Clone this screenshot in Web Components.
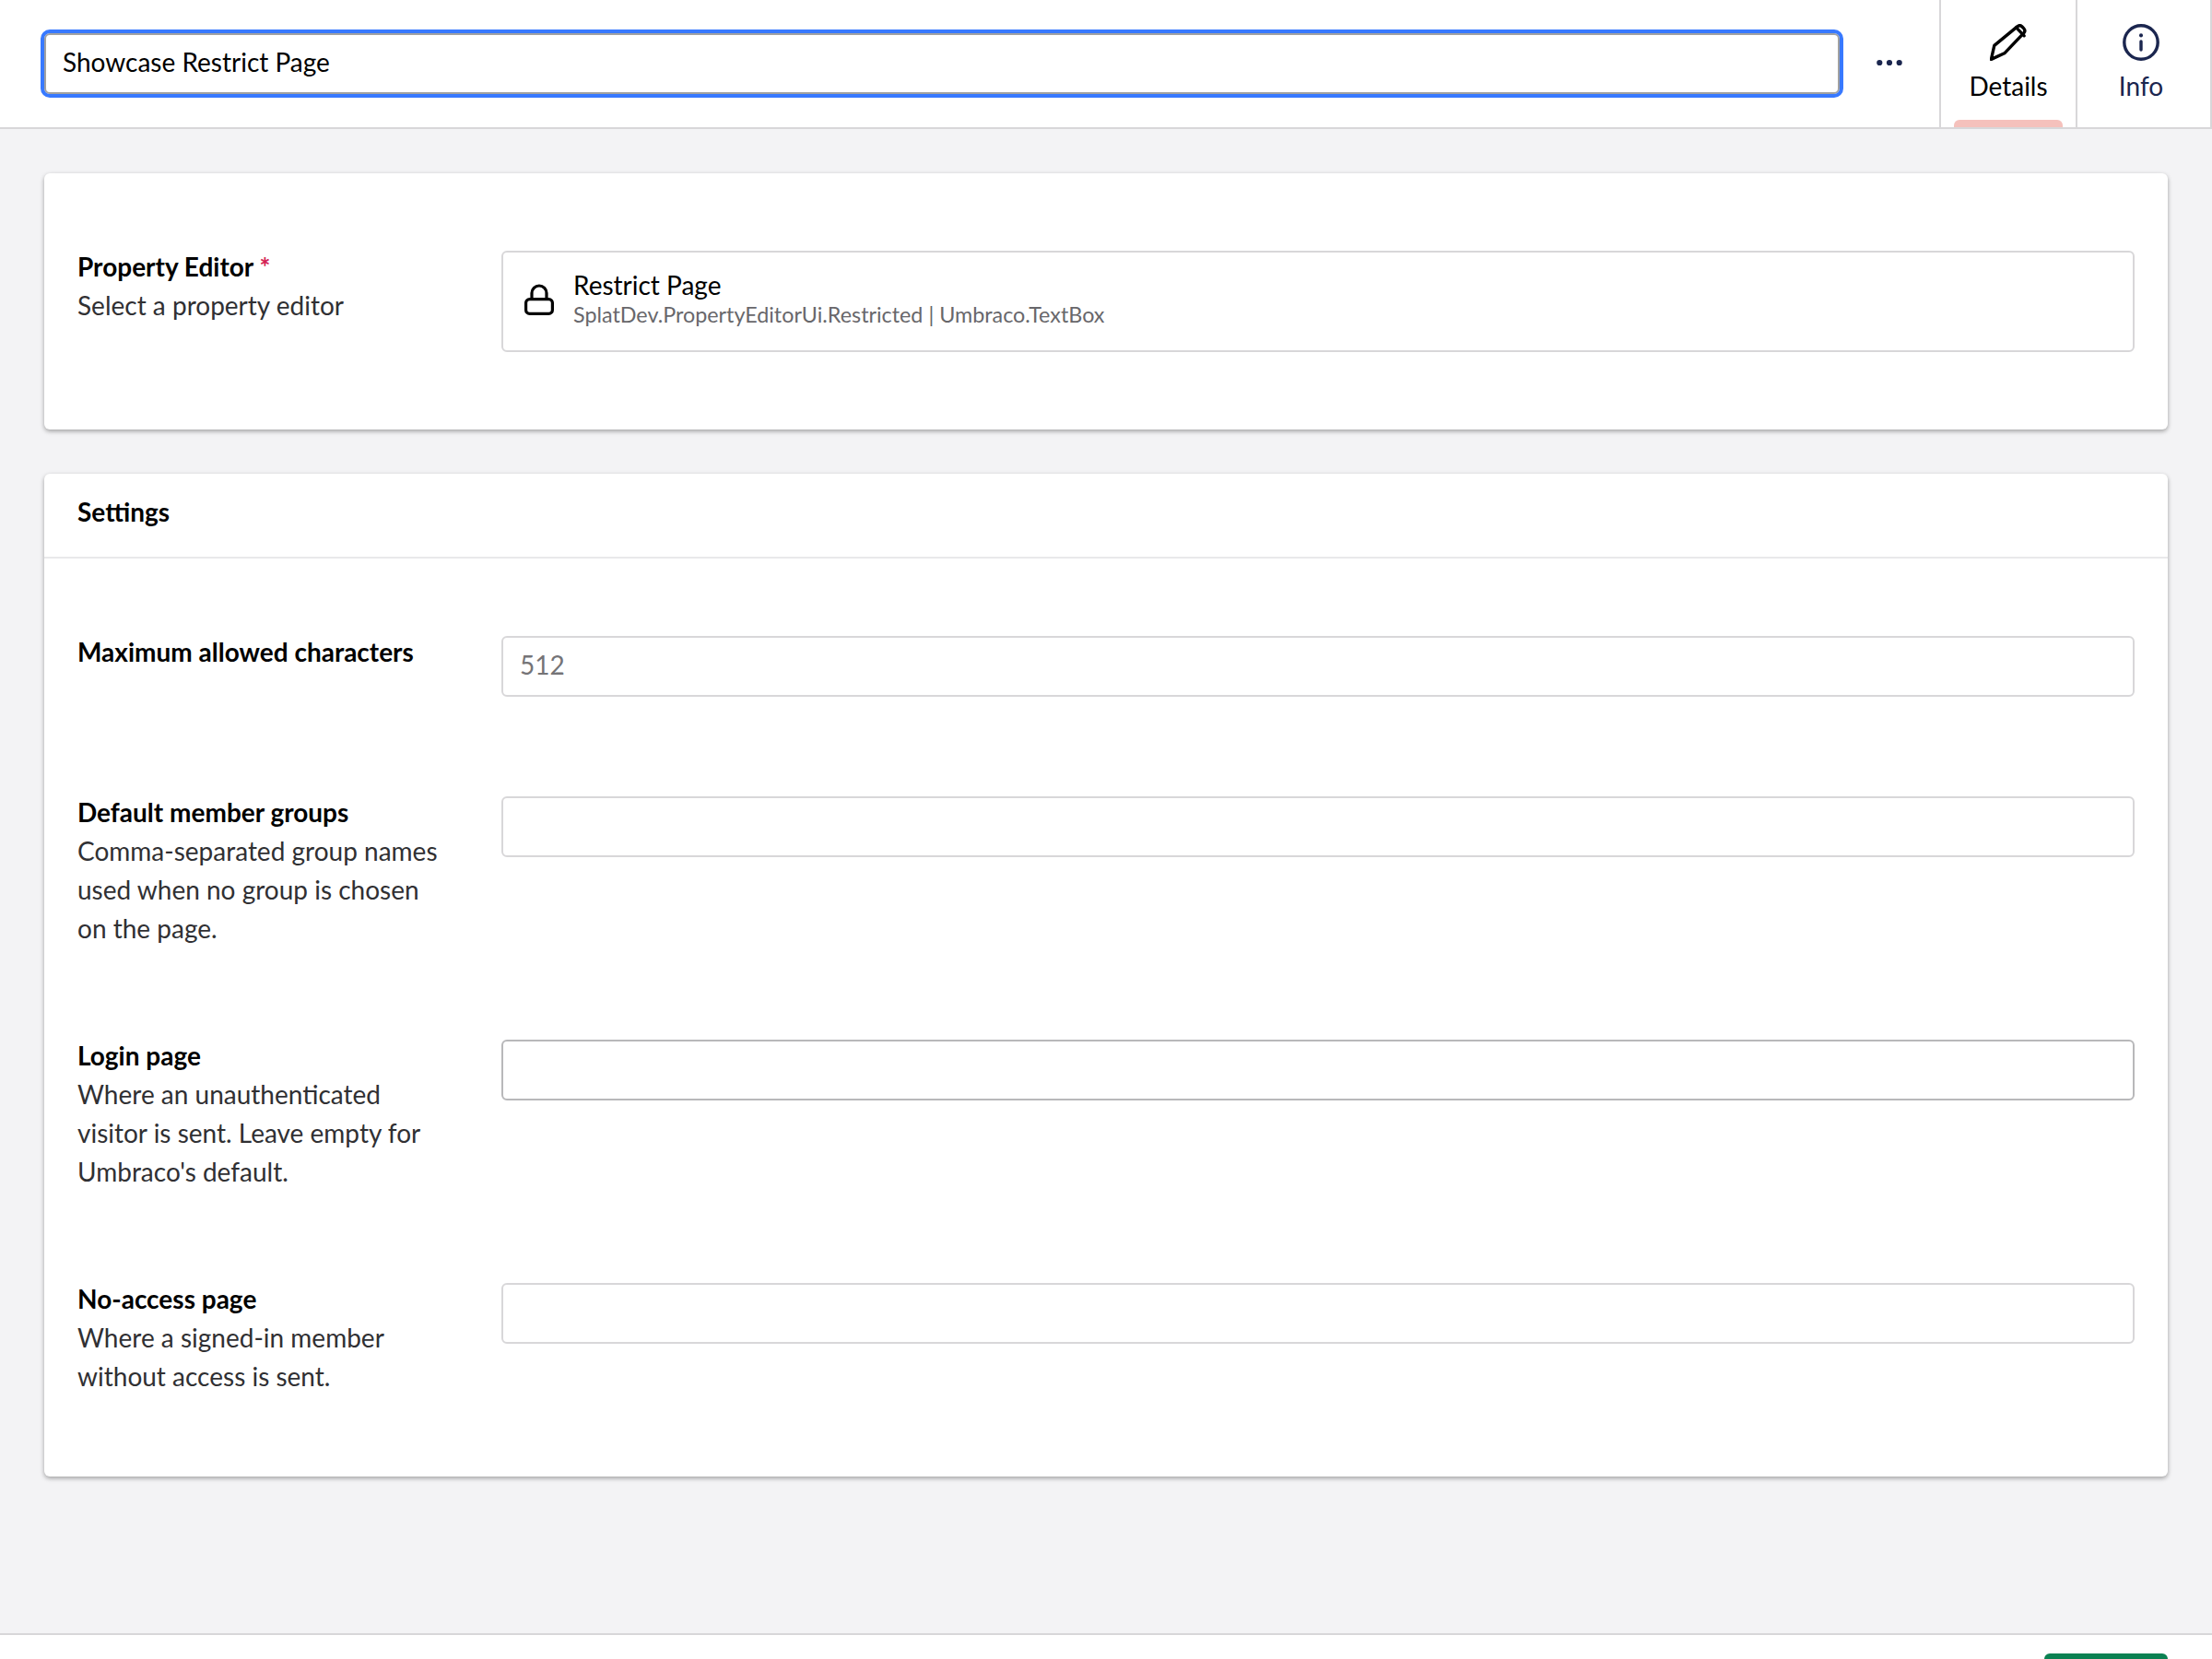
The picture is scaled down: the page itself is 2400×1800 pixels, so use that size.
<!DOCTYPE html>
<html><head><meta charset="utf-8">
<style>
html,body{margin:0;padding:0;height:1800px;overflow:hidden;background:#f3f3f5;font-family:Lato,"Liberation Sans",sans-serif;font-size:28px;line-height:42px;color:#000}
</style></head><body>
<editor-shell>
<editor-header slot="header" value="Showcase Restrict Page"></editor-header>
<prop-card>
  <prop-row label="Property Editor" required desc="Select a property editor">
    <picker-box name="Restrict Page" alias="SplatDev.PropertyEditorUi.Restricted | Umbraco.TextBox"></picker-box>
  </prop-row>
</prop-card>
<prop-card headline="Settings" tail="40">
  <prop-row label="Maximum allowed characters"><text-box placeholder="512"></text-box></prop-row>
  <prop-row label="Default member groups" desc="Comma-separated group names used when no group is chosen on the page."><text-box></text-box></prop-row>
  <prop-row label="Login page" desc="Where an unauthenticated visitor is sent. Leave empty for Umbraco's default."><text-box dark></text-box></prop-row>
  <prop-row label="No-access page" desc="Where a signed-in member without access is sent."><text-box></text-box></prop-row>
</prop-card>
<editor-footer slot="footer"></editor-footer>
</editor-shell>
<script>
function def(name, html, init){
  customElements.define(name, class extends HTMLElement{
    constructor(){super();this.attachShadow({mode:'open'});}
    connectedCallback(){
      this.shadowRoot.innerHTML = typeof html==='function'?html(this):html;
      if(init)init(this);
    }
  });
}
def('editor-shell',`<style>
:host{display:flex;flex-direction:column;height:1800px;overflow:hidden}
main{flex:1;min-height:0;padding:48px 48px 0;display:flex;flex-direction:column;gap:48px}
</style><slot name="header"></slot><main><slot></slot></main><slot name="footer"></slot>`);
def('editor-header',h=>`<style>
:host{display:flex;height:140px;box-sizing:border-box;background:#fff;border-bottom:2px solid #d8d7d9;align-items:stretch}
.name{flex:1;padding:36px 0 36px 48px;display:flex;min-width:0}
input{flex:1;min-width:0;height:66px;box-sizing:border-box;border:2px solid #a1a1a1;border-radius:6px;outline:4px solid #3879ff;outline-offset:0;padding:0 18px 4px;font:28px Lato,sans-serif;color:#000;background:#fff}
.more{width:108px;box-sizing:border-box;padding-bottom:2px;display:flex;align-items:center;justify-content:center}
.more svg{display:block}
.tab{position:relative;box-sizing:border-box;width:148px;border-left:2px solid #d8d7d9;display:flex;flex-direction:column;align-items:center;padding-top:26px;font-size:28px;line-height:40px}
.tab svg{display:block}
.tab span{display:block;margin-top:7px}
.t1{color:#000}
.t2{color:#1b264f;border-right:2px solid #d8d7d9;padding-right:6px}
.bar{position:absolute;left:14px;bottom:0;width:118px;height:8px;background:#f5c1bc;border-radius:6px 6px 0 0}
</style>
<div class="name"><input value="${h.getAttribute('value')}"></div>
<div class="more"><svg width="28" height="8" viewBox="0 0 28 8"><circle cx="3.3" cy="4" r="3.1" fill="#1b264f"/><circle cx="14" cy="4" r="3.1" fill="#1b264f"/><circle cx="24.7" cy="4" r="3.1" fill="#1b264f"/></svg></div>
<div class="tab t1"><svg width="40" height="40" viewBox="0 0 40 40" fill="none" stroke="#000" stroke-width="3.4" stroke-linejoin="round" stroke-linecap="round"><path d="M30 2.6c1.6-1.2 3.6-1 5 .4l1.6 1.6c1.4 1.4 1.6 3.4.4 5L15.8 31.8 1.4 38.4l3.4-15z"/><path d="M28.6 3.8l8.6 9"/></svg><span>Details</span><div class="bar"></div></div>
<div class="tab t2"><svg width="40" height="40" viewBox="0 0 40 40" fill="none" stroke="#1b264f" stroke-width="3.4" stroke-linecap="round"><circle cx="20" cy="20" r="18.2"/><path d="M20 19v9"/><path d="M20 12.2v.4" stroke-width="4"/></svg><span>Info</span></div>
`);
def('editor-footer',`<style>
:host{display:flex;justify-content:flex-end;box-sizing:border-box;height:28px;background:#fff;border-top:2px solid #d8d7d9;padding:20px 48px 0 0;overflow:hidden}
.save{width:134px;height:60px;background:#0b8152;border-radius:6px;flex:none}
</style><div class="save"></div>`);
def('prop-card',h=>{
  const t=h.getAttribute('headline');
  return `<style>
:host{display:block;background:#fff;border-radius:6px;box-shadow:0 2px 6px rgba(0,0,0,.12),0 2px 4px rgba(0,0,0,.24)}
.head{height:82px;padding:0 36px 8px;border-bottom:2px solid #e9e9eb;display:flex;align-items:center;font-weight:700}
.body{padding:32px 36px ${h.getAttribute('tail')||36}px}
</style>${t?`<div class="head">${t}</div>`:''}<div class="body"><slot></slot></div>`;
});
def('prop-row',h=>`<style>
:host{display:grid;grid-template-columns:460px 1fr;padding:48px 0}
.l{padding-right:60px}
.t{font-weight:700}
.req{color:#d42054;font-weight:700}
.d{color:#303033}
.c{padding:4px 0 0;min-width:0;min-height:74px}
</style><div class="l"><div class="t">${h.getAttribute('label')}${h.hasAttribute('required')?' <span class="req">*</span>':''}</div>${h.getAttribute('desc')?`<div class="d">${h.getAttribute('desc')}</div>`:''}</div><div class="c"><slot></slot></div>`);
def('text-box',h=>`<style>
:host{display:block}
input{display:block;width:100%;height:66px;box-sizing:border-box;border:2px solid ${h.hasAttribute('dark')?'#b8b8ba':'#d8d7d9'};border-radius:6px;padding:0 18px 4px;font:28px Lato,sans-serif;background:#fff;outline:none}
input::placeholder{color:#757477;opacity:1}
</style><input placeholder="${h.getAttribute('placeholder')||''}">`);
def('picker-box',h=>`<style>
:host{display:flex;align-items:center;height:110px;box-sizing:border-box;border:2px solid #d8d7d9;border-radius:6px;padding-left:23px}
svg{display:block;flex:none;margin-right:21px;margin-bottom:4px}
.x{padding-bottom:8px}
.n{font-size:28px;line-height:36px;color:#000}
.a{font-size:23.33px;line-height:28px;color:#68676b}
</style><svg width="32" height="36" viewBox="0 0 32 36" fill="none" stroke="#000" stroke-width="3.2" stroke-linejoin="round"><rect x="1.6" y="17.6" width="28.8" height="15.8" rx="4"/><path d="M8 17.6V11a8 8 0 0 1 16 0v6.6"/></svg><div class="x"><div class="n">${h.getAttribute('name')}</div><div class="a">${h.getAttribute('alias')}</div></div>`);
</script>
</body></html>
